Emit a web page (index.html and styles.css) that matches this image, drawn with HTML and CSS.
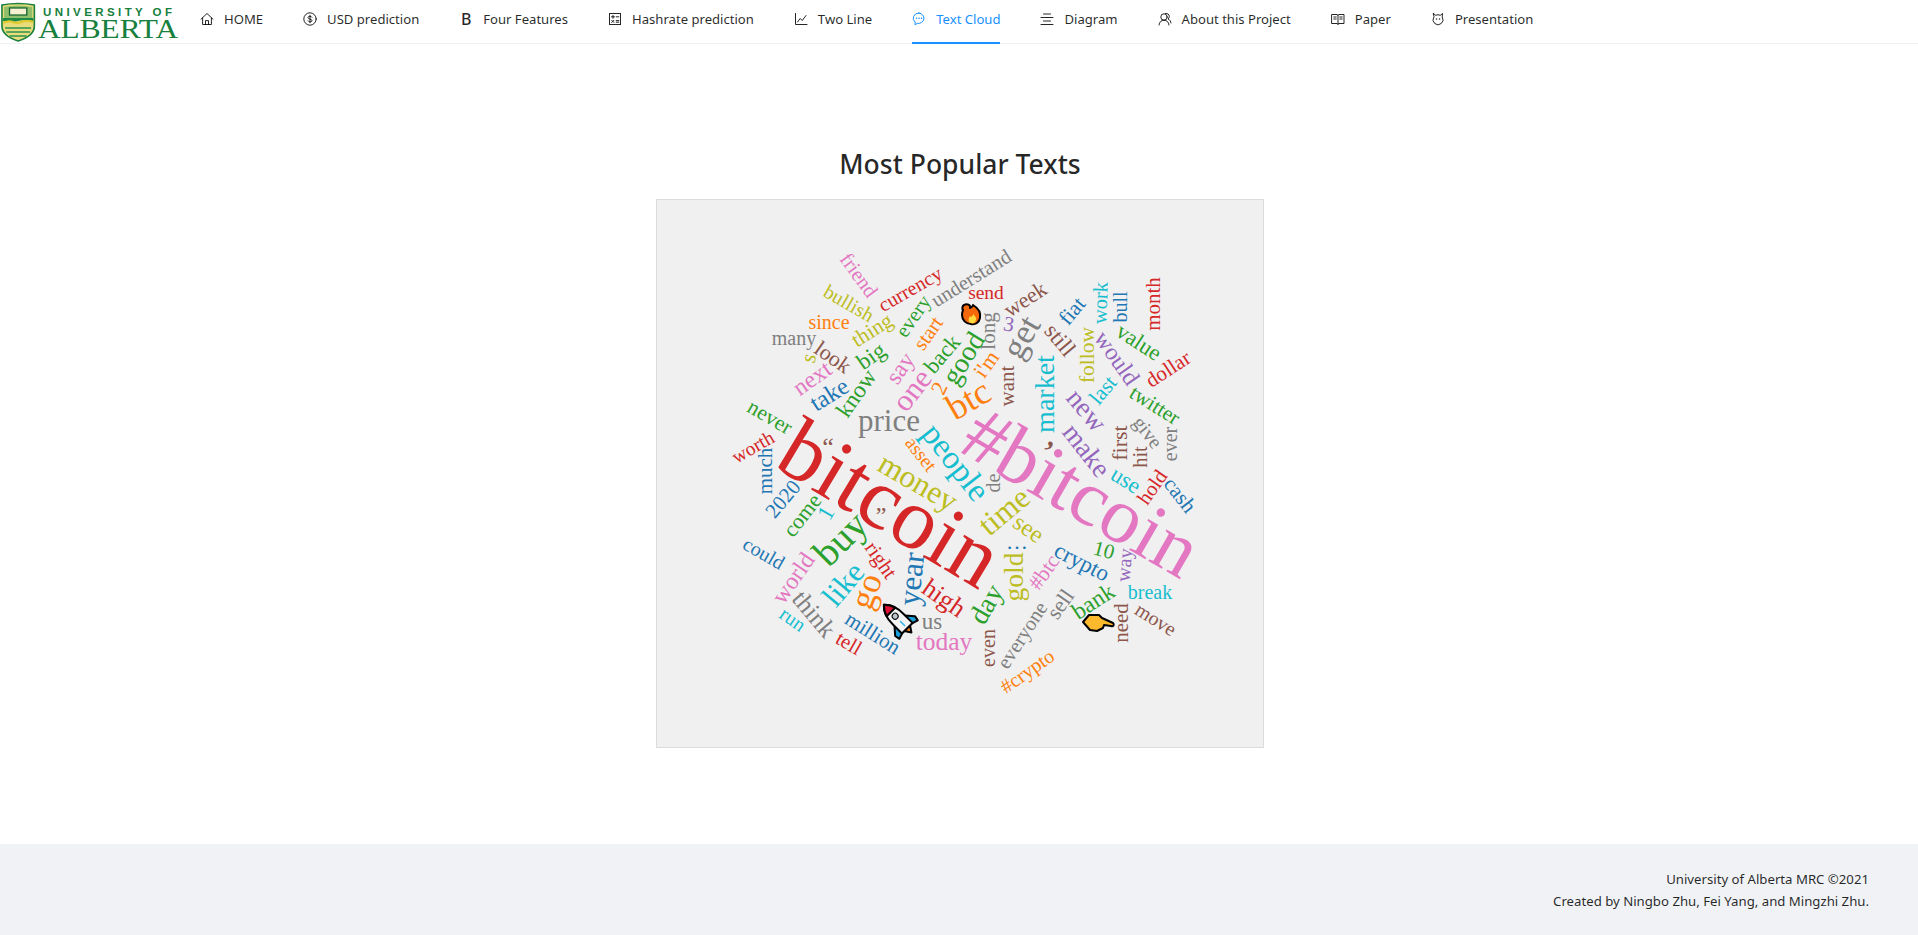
FILE: index.html
```html
<!DOCTYPE html>
<html lang="en">
<head>
<meta charset="utf-8">
<title>Text Cloud</title>
<link rel="stylesheet" href="styles.css">
</head>
<body>
<header class="topbar">
  <a class="logo" href="#">
    <svg class="logo-art" width="180" height="44" viewBox="0 0 180 44">
      <g transform="translate(-0.200 0) scale(1.080 1)">
        <path class="shield-edge" d="M2 5 Q17 2 32 5 V26 Q32 36 17 41 Q2 36 2 26 Z"/>
        <path class="shield-top" d="M4 7 Q17 4 30 7 V19 H4 Z"/>
        <rect class="book" x="9" y="8" width="16" height="7"/>
        <path class="shield-band" d="M3 18 H31 V21 Q24 19 17 21 T3 21 Z"/>
        <path class="shield-stripe" d="M3 23 Q8 20 12 22 T20 22 T31 22"/>
        <path class="shield-field" d="M5 27 H29 V29 H5 Z M6 31 H28 V33 H6 Z M9 35 H25 V37 H9 Z"/>
      </g>
      <text class="logo-small" x="43" y="15.500" textLength="129" lengthAdjust="spacing">UNIVERSITY OF</text>
      <text class="logo-big" x="38" y="38" textLength="140" lengthAdjust="spacingAndGlyphs">ALBERTA</text>
    </svg>
  </a>
  <nav class="menu">
    <a class="item" href="#"><svg class="ico" viewBox="0 0 14 14"><path d="M1 7.200 7 1.500l6 5.700M2.600 6v6.500h8.800V6M5.500 12.500V8.600h3v3.900"/></svg><span>HOME</span></a>
    <a class="item" href="#"><svg class="ico" viewBox="0 0 14 14"><circle cx="7" cy="7" r="6.200"/><path d="M9 5.200C8.600 4 5 3.800 5 5.600c0 1.800 4 1.200 4 3 0 1.700-3.600 1.500-4 .2M7 3.300v7.400"/></svg><span>USD prediction</span></a>
    <a class="item" href="#"><b class="ico-letter">B</b><span>Four Features</span></a>
    <a class="item" href="#"><svg class="ico" viewBox="0 0 14 14"><rect x="1.500" y="1.500" width="11" height="11"/><path d="M3.500 4.800h3M5 3.300v3M8.200 4.800h2.600M3.700 8.300l2.200 2.200M5.900 8.300l-2.200 2.200M8.200 8.600h2.600M8.200 10.200h2.600"/></svg><span>Hashrate prediction</span></a>
    <a class="item" href="#"><svg class="ico" viewBox="0 0 14 14"><path d="M1.500 1.500v11H13M3.500 10l2.700-3.500 2 2L12 3.500"/></svg><span>Two Line</span></a>
    <a class="item active" href="#"><svg class="ico" viewBox="0 0 14 14"><path d="M7 1a5.700 5.200 0 0 0-3.800 9.100l-.2 2.600 2.400-1.300A5.700 5.200 0 1 0 7 1Z"/><path d="M4.500 6.300h.1M7 6.300h.1M9.500 6.300h.1" stroke-width="1.400"/></svg><span>Text Cloud</span></a>
    <a class="item" href="#"><svg class="ico" viewBox="0 0 14 14"><path d="M3.500 2h7M1 5.500h12M3.500 9h7M1 12.500h12"/></svg><span>Diagram</span></a>
    <a class="item" href="#"><svg class="ico" viewBox="0 0 14 14"><circle cx="6" cy="5" r="3.200"/><path d="M1 13c.3-3 2.300-4.800 5-4.800s4.700 1.800 5 4.800M7.500 1.400c2-.3 3.800 1 3.800 3 0 1.200-.6 2-1.300 2.600 1.800.6 2.800 2.400 3 4"/></svg><span>About this Project</span></a>
    <a class="item" href="#"><svg class="ico" viewBox="0 0 14 14"><path d="M1 2.500h5l1 .8 1-.8h5v9H8l-1 .8-1-.8H1ZM7 3.300v9M2.800 5h2.400M2.800 7h2.400M8.800 5h2.400M8.800 7h2.400"/></svg><span>Paper</span></a>
    <a class="item" href="#"><svg class="ico" viewBox="0 0 14 14"><path d="M2.500 1.500 4.700 3.300a5 5 0 0 1 4.600 0L11.500 1.500 11.200 5a5 5 0 1 1-8.400 0Z"/><path d="M5.500 7h.1M8.500 7h.1" stroke-width="1.400"/></svg><span>Presentation</span></a>
  </nav>
</header>

<main class="content">
  <h2 class="title">Most Popular Texts</h2>
  <div class="panel">
    <svg class="cloud" viewBox="656 199 606 547" width="606" height="547">
      <text class="red" font-size="87" transform="translate(890 502) rotate(31)">bitcoin</text>
      <text class="pink" font-size="79" transform="translate(1081 491) rotate(30)">#bitcoin</text>

      <text class="pink" font-size="20.500" transform="translate(858 274) rotate(54)">friend</text>
      <text class="red" font-size="20" transform="translate(909 288) rotate(-30)">currency</text>
      <text class="olive" font-size="20" transform="translate(848 302) rotate(30)">bullish</text>
      <text class="gray" font-size="20.500" transform="translate(970 277) rotate(-32)">understand</text>
      <text class="red" font-size="19.500" transform="translate(985 291)">send</text>
      <text class="orange" font-size="20" transform="translate(828 321)">since</text>
      <text class="olive" font-size="21.500" transform="translate(871 329) rotate(-32)">thing</text>
      <text class="gray" font-size="20" transform="translate(793 337)">many</text>
      <text class="green" font-size="20.500" transform="translate(912 315) rotate(-55)">every</text>
      <text class="orange" font-size="20.500" transform="translate(927 332) rotate(-55)">start</text>
      <text class="gray" font-size="21" transform="translate(987 330) rotate(-90)">long</text>
      <text class="olive" font-size="22" transform="translate(807 357) rotate(-75)">s</text>
      <text class="brown" font-size="22" transform="translate(832 356) rotate(35)">look</text>
      <text class="green" font-size="23" transform="translate(870 355) rotate(-35)">big</text>
      <text class="pink" font-size="24" transform="translate(899 367) rotate(-55)">say</text>
      <text class="green" font-size="22.500" transform="translate(941 353) rotate(-50)">back</text>
      <text class="green" font-size="28" transform="translate(962 357) rotate(-58)">good</text>
      <text class="orange" font-size="22" transform="translate(985 363) rotate(-55)">i'm</text>
      <text class="pink" font-size="24" transform="translate(811 377) rotate(-35)">next</text>
      <text class="blue" font-size="24.500" transform="translate(828 393) rotate(-32)">take</text>
      <text class="green" font-size="23.500" transform="translate(855 392) rotate(-55)">know</text>
      <text class="pink" font-size="30.500" transform="translate(911 389) rotate(-52)">one</text>
      <text class="orange" font-size="22" transform="translate(938 387) rotate(-65)">2</text>
      <text class="orange" font-size="36.500" transform="translate(967 398) rotate(-30)">btc</text>
      <text class="gray" font-size="31" transform="translate(888 419)">price</text>
      <text class="green" font-size="21.500" transform="translate(769 416) rotate(30)">never</text>
      <text class="red" font-size="19.500" transform="translate(752 446) rotate(-30)">worth</text>
      <text class="brown" font-size="26" transform="translate(827 445)">“</text>
      <text class="orange" font-size="19.500" transform="translate(920 453) rotate(52)">asset</text>
      <text class="cyan" font-size="33" transform="translate(955 461) rotate(52)">people</text>
      <text class="olive" font-size="31.500" transform="translate(917 481) rotate(30)">money</text>
      <text class="brown" font-size="38" transform="translate(1045 452) rotate(25)">’</text>
      <text class="blue" font-size="21" transform="translate(764 470) rotate(-90)">much</text>
      <text class="blue" font-size="21" transform="translate(782 498) rotate(-50)">2020</text>
      <text class="green" font-size="22" transform="translate(801 514) rotate(-52)">come</text>
      <text class="cyan" font-size="23" transform="translate(825 512) rotate(-60)">1</text>
      <text class="brown" font-size="24" transform="translate(880 514)">”</text>
      <text class="green" font-size="39" transform="translate(839 537) rotate(-45)">buy</text>
      <text class="red" font-size="21" transform="translate(880 559) rotate(55)">right</text>
      <text class="blue" font-size="20" transform="translate(763 552) rotate(30)">could</text>
      <text class="pink" font-size="24" transform="translate(792 577) rotate(-55)">world</text>
      <text class="gray" font-size="25.500" transform="translate(813 613) rotate(50)">think</text>
      <text class="cyan" font-size="20" transform="translate(792 618) rotate(35)">run</text>
      <text class="cyan" font-size="31" transform="translate(842 583) rotate(-50)">like</text>
      <text class="orange" font-size="35" transform="translate(865 590) rotate(-70)">go</text>
      <text class="blue" font-size="31" transform="translate(910 578) rotate(-84)">year</text>
      <text class="red" font-size="26" transform="translate(943 597) rotate(35)">high</text>
      <text class="blue" font-size="21" transform="translate(872 632) rotate(32)">million</text>
      <text class="red" font-size="20.500" transform="translate(848 642) rotate(30)">tell</text>
      <text class="gray" font-size="23" transform="translate(931 620)">us</text>
      <text class="pink" font-size="25.500" transform="translate(943 640)">today</text>
      <text class="brown" font-size="20" transform="translate(987 647) rotate(-90)">even</text>
      <text class="green" font-size="28" transform="translate(985 603) rotate(-60)">day</text>
      <text class="olive" font-size="31.500" transform="translate(1003 510) rotate(-40)">time</text>
      <text class="gray" font-size="20" transform="translate(992 482) rotate(-90)">de</text>
      <text class="olive" font-size="24.500" transform="translate(1028 527) rotate(35)">see</text>
      <text class="olive" font-size="27.500" transform="translate(1012 576) rotate(-90)">gold</text>
      <text class="blue" font-size="22" transform="translate(1016 540)">…</text>
      <text class="blue" font-size="23" transform="translate(1081 561) rotate(27)">crypto</text>
      <text class="pink" font-size="21.500" transform="translate(1043 571) rotate(-55)">#btc</text>
      <text class="green" font-size="21" transform="translate(1103 549) rotate(15)">10</text>
      <text class="purple" font-size="20" transform="translate(1123 564) rotate(-85)">way</text>
      <text class="gray" font-size="22" transform="translate(1059 603) rotate(-55)">sell</text>
      <text class="gray" font-size="20.500" transform="translate(1021 634) rotate(-57)">everyone</text>
      <text class="green" font-size="23.500" transform="translate(1092 600) rotate(-33)">bank</text>
      <text class="cyan" font-size="20" transform="translate(1149 591)">break</text>
      <text class="brown" font-size="20" transform="translate(1155 618) rotate(32)">move</text>
      <text class="brown" font-size="21" transform="translate(1120 622) rotate(-90)">need</text>
      <text class="orange" font-size="20" transform="translate(1026 670) rotate(-35)">#crypto</text>
      <text class="blue" font-size="21.500" transform="translate(1179 494) rotate(52)">cash</text>
      <text class="red" font-size="20.500" transform="translate(1151 486) rotate(-55)">hold</text>
      <text class="cyan" font-size="23" transform="translate(1125 479) rotate(32)">use</text>
      <text class="purple" font-size="27.500" transform="translate(1086 449) rotate(52)">make</text>
      <text class="purple" font-size="27.500" transform="translate(1086 409) rotate(50)">new</text>
      <text class="brown" font-size="22" transform="translate(1118 442) rotate(-90)">first</text>
      <text class="brown" font-size="20.500" transform="translate(1139 456) rotate(-90)">hit</text>
      <text class="gray" font-size="20" transform="translate(1169 443) rotate(-90)">ever</text>
      <text class="gray" font-size="20" transform="translate(1147 431) rotate(52)">give</text>
      <text class="green" font-size="21" transform="translate(1154 404) rotate(32)">twitter</text>
      <text class="cyan" font-size="21.500" transform="translate(1102 389) rotate(-50)">last</text>
      <text class="purple" font-size="24" transform="translate(1116 357) rotate(55)">would</text>
      <text class="red" font-size="21" transform="translate(1167 368) rotate(-33)">dollar</text>
      <text class="green" font-size="22.500" transform="translate(1138 341) rotate(33)">value</text>
      <text class="olive" font-size="21.500" transform="translate(1086 354) rotate(-90)">follow</text>
      <text class="cyan" font-size="28" transform="translate(1043 393) rotate(-90)">market</text>
      <text class="brown" font-size="21" transform="translate(1006 385) rotate(-90)">want</text>
      <text class="gray" font-size="35" transform="translate(1020 336) rotate(-60)">get</text>
      <text class="brown" font-size="23" transform="translate(1059 339) rotate(50)">still</text>
      <text class="blue" font-size="21.500" transform="translate(1071 310) rotate(-50)">fiat</text>
      <text class="cyan" font-size="20.500" transform="translate(1099 302) rotate(-88)">work</text>
      <text class="blue" font-size="20" transform="translate(1119 306) rotate(-90)">bull</text>
      <text class="red" font-size="21" transform="translate(1152 303) rotate(-90)">month</text>
      <text class="brown" font-size="22" transform="translate(1024 298) rotate(-33)">week</text>
      <text class="purple" font-size="21" transform="translate(1008 323) rotate(10)">3</text>

      <g class="emoji" transform="translate(971 313)">
        <path class="fire-o" d="M-8-9c3-2 7 0 6 3 2-1 3-2 3-3 5 3 8 8 7 13-1 5-5 7-9 6-5 0-9-4-9-9 0-3 1-4 1-5-1-1-1-4 1-5Z"/>
        <path class="fire-y" d="M-2 2c1 2 3 0 3-2 2 2 4 4 3 6-1 3-3 4-5 3-3 0-3-4-1-7Z"/>
      </g>
      <g class="emoji" transform="translate(897 618) rotate(-45)">
        <path class="rk-fin" d="M-7 2-14 10-13 15-7 13H7L13 15 14 10 7 2Z"/>
        <path class="rk-flame" d="M-4 13H4L0 19Z"/>
        <path class="rk-body" d="M0-20C6-15 7.500-8 7.500 0V13H-7.500V0C-7.500-8-6-15 0-20Z"/>
        <path class="rk-nose" d="M0-20C3-17 5-14 6-10H-6C-5-14-3-17 0-20Z"/>
        <circle class="rk-win" cx="0" cy="-4" r="3"/>
        <path class="rk-line" d="M0 3V10"/>
      </g>
      <g class="emoji" transform="translate(1097 621)">
        <path class="hand" d="M-15 0-9-7 1-7 4-4 15 1C17 3 15 5 13 4L6 3 5 6-1 9-8 8Z"/>
      </g>
    </svg>
  </div>
</main>

<footer class="footer">
  <div>University of Alberta MRC ©2021</div>
  <div>Created by Ningbo Zhu, Fei Yang, and Mingzhi Zhu.</div>
</footer>
</body>
</html>
```

FILE: styles.css
```css
html, body {
  margin: 0;
  padding: 0;
  background: #fff;
  color: rgba(0, 0, 0, 0.85);
  font-family: "Noto Sans", "Open Sans", sans-serif;
  font-size: 14px;
}
body {
  display: flex;
  flex-direction: column;
  height: 935px;
  overflow: hidden;
}
.topbar {
  display: flex;
  height: 44px;
  box-sizing: border-box;
  border-bottom: 1px solid #f0f0f0;
}
.logo {
  display: block;
  width: 180px;
  height: 43px;
  flex: none;
}
.logo-art { display: block; }
.shield-edge { fill: #e9dc7a; stroke: #1a7f3f; stroke-width: 1.500; }
.shield-top { fill: #8fbf6a; }
.book { fill: #f5f0d0; stroke: #0f5f2f; stroke-width: 1.200; }
.shield-band { fill: #1f8a45; }
.shield-stripe { fill: none; stroke: #e2c92c; stroke-width: 2; }
.shield-field { fill: #5aa55a; }
.logo-small {
  font-family: "Liberation Sans", sans-serif;
  font-weight: 700;
  font-size: 11.500px;
  fill: #16803c;
}
.logo-big {
  font-family: "Liberation Serif", serif;
  font-size: 27px;
  fill: #16803c;
}
.menu {
  display: flex;
  height: 44px;
}
.item {
  display: flex;
  align-items: center;
  gap: 10px;
  margin: 0 20px;
  height: 44px;
  padding-bottom: 6px;
  box-sizing: border-box;
  color: rgba(0, 0, 0, 0.85);
  text-decoration: none;
  white-space: nowrap;
  font-size: 13.100px;
}
.item.active {
  color: #1890ff;
  padding-bottom: 4px;
  border-bottom: 2px solid #1890ff;
}
.ico {
  width: 14px;
  height: 14px;
  flex: none;
  fill: none;
  stroke: currentColor;
  stroke-width: 1;
  stroke-linecap: round;
}
.ico-letter {
  display: block;
  width: 14px;
  text-align: center;
  font-weight: 500;
  font-size: 16px;
}
.content {
  flex: 1;
  display: flex;
  flex-direction: column;
  align-items: center;
  padding: 101px 0 0 2px;
}
.title {
  margin: 0 0 16px;
  font-size: 26.500px;
  font-weight: 500;
  line-height: 38px;
  color: rgba(0, 0, 0, 0.85);
}
.panel {
  width: 608px;
  height: 549px;
  box-sizing: border-box;
  background: #f0f0f0;
  border: 1px solid #dcdcdc;
}
.cloud {
  display: block;
}
.cloud text {
  font-family: "Liberation Serif", "Times New Roman", serif;
  text-anchor: middle;
  dominant-baseline: central;
}
.red { fill: #d62728; }
.pink { fill: #e377c2; }
.olive { fill: #bcbd22; }
.gray { fill: #7f7f7f; }
.green { fill: #2ca02c; }
.orange { fill: #ff7f0e; }
.blue { fill: #1f77b4; }
.cyan { fill: #17becf; }
.purple { fill: #9467bd; }
.brown { fill: #8c564b; }
.emoji path, .emoji circle { stroke: #000; stroke-width: 2; stroke-linejoin: round; }
.fire-o { fill: #f4680b; }
.fire-y { fill: #ffd83b; stroke: none !important; }
.rk-body { fill: #f4f4f4; }
.rk-nose { fill: #dd1133; }
.rk-fin { fill: #1a9fd8; }
.rk-flame { fill: #f58a1f; }
.rk-win { fill: #b9c4cc; stroke-width: 1 !important; }
.rk-line { fill: none; stroke: #35b6e6 !important; stroke-width: 1.500 !important; }
.hand { fill: #fdb92e; }
.footer {
  flex: none;
  box-sizing: border-box;
  height: 91px;
  padding: 24px 49px 0 0;
  background: #f0f2f5;
  text-align: right;
  line-height: 22px;
  font-size: 13.200px;
}
```
